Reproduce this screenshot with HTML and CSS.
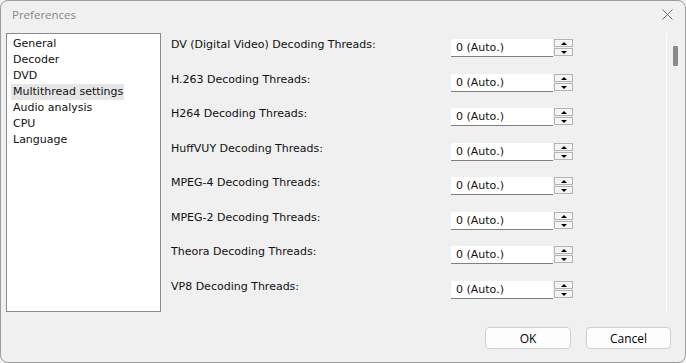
FILE: index.html
```html
<!DOCTYPE html>
<html>
<head>
<meta charset="utf-8">
<link rel="stylesheet" href="styles.css">
</head>
<body>
<div class="window">
  <div class="titlebar">
    <span class="title">Preferences</span>
    <span class="close">
      <svg width="11" height="11" viewBox="0 0 11 11"><path d="M0.5 0.5 L10.5 10.5 M10.5 0.5 L0.5 10.5" stroke="#6a6a6a" stroke-width="1" fill="none"/></svg>
    </span>
  </div>
  <div class="main">
    <div class="list">
      <div class="item">General</div>
      <div class="item">Decoder</div>
      <div class="item">DVD</div>
      <div class="item selected">Multithread settings</div>
      <div class="item">Audio analysis</div>
      <div class="item">CPU</div>
      <div class="item">Language</div>
    </div>
    <div class="pane">
      <div class="row"><span class="label">DV (Digital Video) Decoding Threads:</span><span class="field">0 (Auto.)</span><span class="spin"><span class="sb up"></span><span class="sb down"></span></span></div>
      <div class="row"><span class="label">H.263 Decoding Threads:</span><span class="field">0 (Auto.)</span><span class="spin"><span class="sb up"></span><span class="sb down"></span></span></div>
      <div class="row"><span class="label">H264 Decoding Threads:</span><span class="field">0 (Auto.)</span><span class="spin"><span class="sb up"></span><span class="sb down"></span></span></div>
      <div class="row"><span class="label">HuffVUY Decoding Threads:</span><span class="field">0 (Auto.)</span><span class="spin"><span class="sb up"></span><span class="sb down"></span></span></div>
      <div class="row"><span class="label">MPEG-4 Decoding Threads:</span><span class="field">0 (Auto.)</span><span class="spin"><span class="sb up"></span><span class="sb down"></span></span></div>
      <div class="row"><span class="label">MPEG-2 Decoding Threads:</span><span class="field">0 (Auto.)</span><span class="spin"><span class="sb up"></span><span class="sb down"></span></span></div>
      <div class="row"><span class="label">Theora Decoding Threads:</span><span class="field">0 (Auto.)</span><span class="spin"><span class="sb up"></span><span class="sb down"></span></span></div>
      <div class="row"><span class="label">VP8 Decoding Threads:</span><span class="field">0 (Auto.)</span><span class="spin"><span class="sb up"></span><span class="sb down"></span></span></div>
    </div>
    <div class="sep"></div>
    <div class="scrollbar"><div class="thumb"></div></div>
  </div>
  <div class="footer">
    <button class="btn ok">OK</button>
    <button class="btn cancel">Cancel</button>
  </div>
</div>
</body>
</html>
```

FILE: styles.css
```css
html, body {
  margin: 0;
  padding: 0;
  background: #f0f0f0;
}
.window {
  width: 686px;
  height: 363px;
  box-sizing: border-box;
  border: 1px solid #9c9c9c;
  border-radius: 8px;
  background: #f0f0f0;
  overflow: hidden;
  font-family: "DejaVu Sans", sans-serif;
  font-size: 11px;
  color: #111;
}
.titlebar {
  height: 32px;
  display: flex;
  align-items: flex-start;
  justify-content: space-between;
}
.title {
  font-family: "Open Sans", "Noto Sans", sans-serif;
  font-size: 11.5px;
  color: #888;
  padding: 6px 0 0 11px;
  line-height: 16px;
}
.close {
  display: block;
  padding: 8px 12px 0 0;
  line-height: 0;
}
.main {
  display: flex;
  height: 279px;
}
.list {
  margin-left: 5px;
  width: 155px;
  height: 279px;
  box-sizing: border-box;
  border: 1px solid #8c8c8c;
  background: #fff;
  padding: 2px 0 0 4px;
  display: flex;
  flex-direction: column;
  align-items: flex-start;
}
.item {
  line-height: 16px;
  padding: 0 1px 0 2px;
  white-space: nowrap;
}
.item.selected {
  background: #e6e6e6;
}
.pane {
  width: 505px;
  box-sizing: border-box;
  padding: 3px 0 0 10px;
  display: flex;
  flex-direction: column;
}
.row {
  height: 35px;
  display: grid;
  grid-template-columns: 279px 102px 19px;
  column-gap: 1px;
  align-items: start;
}
.label {
  margin-top: 1px;
  line-height: 16px;
  white-space: nowrap;
}
.field {
  margin-top: 3px;
  height: 17px;
  line-height: 17px;
  background: #fff;
  border-bottom: 1px solid #808080;
  padding-left: 5px;
}
.spin {
  margin-top: 3px;
  display: flex;
  flex-direction: column;
  gap: 1px;
}
.sb {
  height: 8px;
  box-sizing: border-box;
  border: 1px solid #b4b4b4;
  background: #f4f4f4;
  position: relative;
}
.sb::after {
  content: "";
  position: absolute;
  left: 6px;
  top: 2px;
  width: 0;
  height: 0;
  border-left: 3px solid transparent;
  border-right: 3px solid transparent;
}
.sb.up::after {
  border-bottom: 3px solid #000;
}
.sb.down::after {
  border-top: 3px solid #000;
}
.sep {
  width: 1px;
  background: #fff;
}
.scrollbar {
  width: 18px;
  position: relative;
}
.thumb {
  position: absolute;
  left: 6px;
  top: 13px;
  width: 5px;
  height: 20px;
  background: #8a8a8a;
  border-radius: 1px;
}
.footer {
  display: flex;
  justify-content: flex-end;
  gap: 15px;
  padding: 15px 14px 0 0;
}
.btn {
  height: 22px;
  box-sizing: border-box;
  border: 1px solid #d0d0d0;
  border-radius: 4px;
  background: #fdfdfd;
  font-family: "Open Sans", "Noto Sans", sans-serif;
  font-size: 12px;
  color: #000;
  padding: 0;
}
.ok { width: 86px; }
.cancel { width: 85px; }
```
